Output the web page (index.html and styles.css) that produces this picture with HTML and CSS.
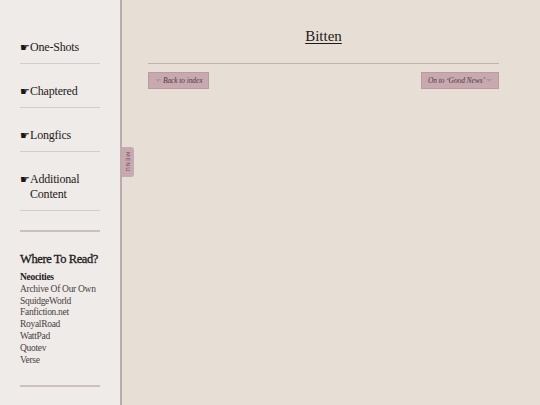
FILE: index.html
```html
<!DOCTYPE html>
<html>
<head>
<meta charset="utf-8">
<link rel="stylesheet" href="styles.css">
</head>
<body>
<div class="page">
  <aside class="sidebar">
    <nav class="nav">
      <div class="nav-item"><span class="hand">☛</span>One-Shots</div>
      <div class="nav-item"><span class="hand">☛</span>Chaptered</div>
      <div class="nav-item"><span class="hand">☛</span>Longfics</div>
      <div class="nav-item"><span class="hand">☛</span><span class="wrap">Additional<br>Content</span></div>
    </nav>
    <div class="rule"></div>
    <section class="read">
      <h2 class="read-title">Where To Read?</h2>
      <ul class="read-list">
        <li class="current">Neocities</li>
        <li>Archive Of Our Own</li>
        <li>SquidgeWorld</li>
        <li>Fanfiction.net</li>
        <li>RoyalRoad</li>
        <li>WattPad</li>
        <li>Quotev</li>
        <li>Verse</li>
      </ul>
    </section>
    <div class="rule rule-bottom"></div>
    <div class="menu-tab">MENU</div>
  </aside>
  <main class="main">
    <h1 class="title">Bitten</h1>
    <div class="divider"></div>
    <div class="buttons">
      <a class="btn"><span class="bhand">☜</span> Back to index</a>
      <a class="btn">On to ‘Good News’ <span class="bhand">☞</span></a>
    </div>
  </main>
</div>
</body>
</html>
```

FILE: styles.css
```css
html, body {
  margin: 0;
  padding: 0;
  height: 100%;
}
body {
  font-family: "Liberation Serif", "DejaVu Serif", serif;
  background: #e7dfd6;
  color: #2a2424;
}
.page {
  display: flex;
  min-height: 405px;
}
.sidebar {
  position: relative;
  width: 80px;
  flex: none;
  padding: 20px 20px 0 20px;
  background: #eeebe8;
  border-right: 2px solid #bea9ad;
}
.nav-item {
  display: flex;
  margin-top: 20px;
  padding-bottom: 8px;
  font-size: 12px;
  line-height: 15px;
  color: #262020;
  border-bottom: 1px solid #d6cccc;
  letter-spacing: -0.2px;
  white-space: nowrap;
}
.hand {
  font-family: "DejaVu Sans", sans-serif;
  font-size: 11px;
  width: 10px;
  flex: none;
  color: #1a1616;
}
.rule {
  margin-top: 19px;
  border-top: 2px solid #cdbfbf;
}
.read {
  padding-top: 19px;
}
.read-title {
  margin: 0 0 5px 0;
  font-size: 12.5px;
  line-height: 16px;
  font-weight: normal;
  color: #1e1a1a;
  letter-spacing: -0.4px;
  white-space: nowrap;
  -webkit-text-stroke: 0.3px #1e1a1a;
}
.read-list {
  list-style: none;
  margin: 0;
  padding: 0;
  font-size: 9.5px;
  line-height: 11.8px;
  color: #4a4242;
  letter-spacing: -0.3px;
  white-space: nowrap;
}
.read-list .current {
  font-weight: bold;
  color: #1e1a1a;
}
.rule-bottom {
  margin-top: 19px;
}
.menu-tab {
  position: absolute;
  left: 100%;
  margin-left: 2px;
  top: 147px;
  width: 12px;
  height: 30px;
  background: #c8a9b0;
  border-radius: 0 3px 3px 0;
  writing-mode: vertical-rl;
  font-family: "DejaVu Sans", sans-serif;
  font-size: 5.5px;
  letter-spacing: 1px;
  color: #6a5358;
  display: flex;
  align-items: center;
  justify-content: center;
}
.main {
  flex: 1;
  padding: 0 41px 0 26px;
}
.title {
  margin: 27px 0 0 0;
  text-align: center;
  font-size: 15px;
  line-height: 18px;
  font-weight: normal;
  text-decoration: underline;
  text-underline-offset: 2px;
  color: #1e1a1a;
}
.divider {
  margin-top: 18px;
  border-top: 1px solid #bdb4ae;
}
.buttons {
  display: flex;
  justify-content: space-between;
  margin-top: 8px;
}
.btn {
  display: block;
  padding: 0 6px;
  height: 15px;
  line-height: 15px;
  font-size: 7.5px;
  letter-spacing: -0.1px;
  font-style: italic;
  color: #4a3c40;
  background: #c9a9b0;
  border: 1px solid #bc9aa2;
  white-space: nowrap;
}
.bhand {
  font-family: "DejaVu Sans", sans-serif;
  font-style: normal;
  font-size: 7px;
  color: #7a666b;
}
```
